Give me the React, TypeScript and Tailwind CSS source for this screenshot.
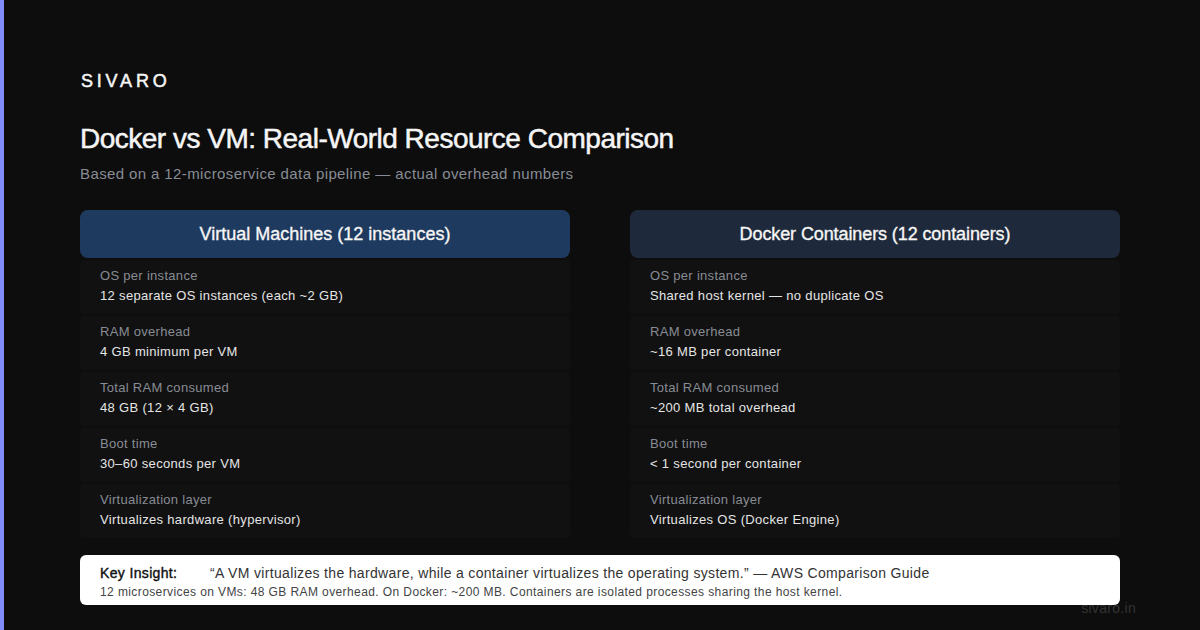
import React from 'react';

interface Row {
  label: string;
  value: string;
}

const vmRows: Row[] = [
  { label: 'OS per instance', value: '12 separate OS instances (each ~2 GB)' },
  { label: 'RAM overhead', value: '4 GB minimum per VM' },
  { label: 'Total RAM consumed', value: '48 GB (12 × 4 GB)' },
  { label: 'Boot time', value: '30–60 seconds per VM' },
  { label: 'Virtualization layer', value: 'Virtualizes hardware (hypervisor)' },
];

const dockerRows: Row[] = [
  { label: 'OS per instance', value: 'Shared host kernel — no duplicate OS' },
  { label: 'RAM overhead', value: '~16 MB per container' },
  { label: 'Total RAM consumed', value: '~200 MB total overhead' },
  { label: 'Boot time', value: '< 1 second per container' },
  { label: 'Virtualization layer', value: 'Virtualizes OS (Docker Engine)' },
];

const Column: React.FC<{ title: string; headerClass: string; rows: Row[] }> = ({ title, headerClass, rows }) => (
  <div className="flex flex-col">
    <div className={`h-12 rounded-lg flex items-center justify-center text-[18px] text-[#f5f5f5] [-webkit-text-stroke:0.35px_#f5f5f5] ${headerClass}`}>
      {title}
    </div>
    <div className="mt-0.5 flex flex-col gap-0.5">
      {rows.map((row) => (
        <div key={row.label} className="h-[54px] bg-[#111111] rounded px-5 pt-[6px]">
          <div className="text-[13px] leading-[20px] tracking-[0.3px] text-[#888c94]">{row.label}</div>
          <div className="text-[13px] leading-[20px] tracking-[0.33px] text-[#e5e5e5]">{row.value}</div>
        </div>
      ))}
    </div>
  </div>
);

export default function App() {
  return (
    <div className="relative w-[1200px] h-[630px] overflow-hidden bg-[#0d0d0d] border-l-4 border-[#818cf8] pl-[76px] pr-20 pt-[70px] font-['Liberation_Sans',sans-serif]">
      <div className="pl-px text-[18px] leading-[22px] tracking-[3.8px] text-[#f5f5f5] [-webkit-text-stroke:0.5px_#f5f5f5]">SIVARO</div>
      <h1 className="mt-[29px] text-[28px] leading-[36px] font-normal tracking-[-0.5px] text-[#f5f5f5] [-webkit-text-stroke:0.5px_#f5f5f5]">
        Docker vs VM: Real-World Resource Comparison
      </h1>
      <p className="mt-[7px] text-[15px] leading-[20px] tracking-[0.39px] text-[#888c94]">
        Based on a 12-microservice data pipeline — actual overhead numbers
      </p>

      <div className="mt-[26px] grid grid-cols-2 gap-[60px]">
        <Column title="Virtual Machines (12 instances)" headerClass="bg-[#1e3a5f]" rows={vmRows} />
        <Column title="Docker Containers (12 containers)" headerClass="bg-[#1e293b] tracking-[-0.1px]" rows={dockerRows} />
      </div>

      <span className="absolute right-[64px] bottom-[14px] text-[14px] leading-[16px] tracking-[0.3px] text-[#333333]">sivaro.in</span>

      <div className="relative mt-[17px] h-[50px] bg-white rounded-md px-5 pt-[9px]">
        <div className="flex text-[14px] leading-[18px] tracking-[0.33px] text-[#333333]">
          <strong className="w-[110px] font-normal tracking-[0.35px] text-[#111111] [-webkit-text-stroke:0.4px_#111111]">Key Insight:</strong>
          <span>“A VM virtualizes the hardware, while a container virtualizes the operating system.” — AWS Comparison Guide</span>
        </div>
        <div className="mt-0.5 text-[12px] leading-[16px] tracking-[0.4px] text-[#444444]">
          12 microservices on VMs: 48 GB RAM overhead. On Docker: ~200 MB. Containers are isolated processes sharing the host kernel.
        </div>
      </div>
    </div>
  );
}
